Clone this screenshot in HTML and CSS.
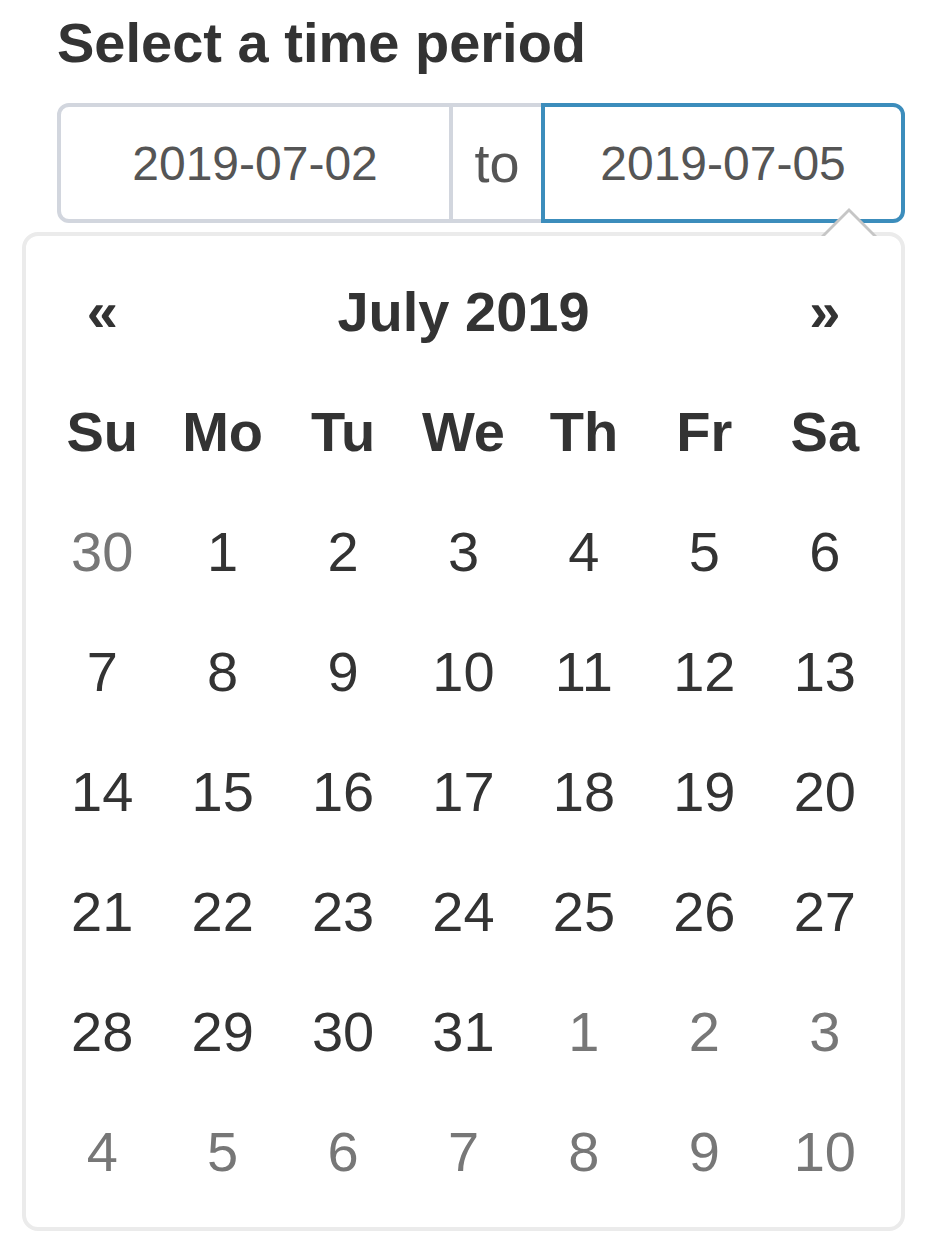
FILE: index.html
```html
<!DOCTYPE html>
<html lang="en">
<head>
<meta charset="utf-8">
<title>Select a time period</title>
<link rel="stylesheet" href="styles.css">
</head>
<body>
<div class="page">
  <label class="title">Select a time period</label>
  <div class="range">
    <div class="field start">2019-07-02</div>
    <div class="addon">to</div>
    <div class="field end">2019-07-05</div>
  </div>
  <div class="picker">
    <div class="cal">
      <div class="nav prev">«</div>
      <div class="month">July 2019</div>
      <div class="nav next">»</div>

      <div class="dow">Su</div><div class="dow">Mo</div><div class="dow">Tu</div><div class="dow">We</div><div class="dow">Th</div><div class="dow">Fr</div><div class="dow">Sa</div>

      <div class="day old">30</div><div class="day">1</div><div class="day">2</div><div class="day">3</div><div class="day">4</div><div class="day">5</div><div class="day">6</div>
      <div class="day">7</div><div class="day">8</div><div class="day">9</div><div class="day">10</div><div class="day">11</div><div class="day">12</div><div class="day">13</div>
      <div class="day">14</div><div class="day">15</div><div class="day">16</div><div class="day">17</div><div class="day">18</div><div class="day">19</div><div class="day">20</div>
      <div class="day">21</div><div class="day">22</div><div class="day">23</div><div class="day">24</div><div class="day">25</div><div class="day">26</div><div class="day">27</div>
      <div class="day">28</div><div class="day">29</div><div class="day">30</div><div class="day">31</div><div class="day new">1</div><div class="day new">2</div><div class="day new">3</div>
      <div class="day new">4</div><div class="day new">5</div><div class="day new">6</div><div class="day new">7</div><div class="day new">8</div><div class="day new">9</div><div class="day new">10</div>
    </div>
  </div>
</div>
</body>
</html>
```

FILE: styles.css
```css
html, body {
  margin: 0;
  padding: 0;
  background: #fff;
}

body {
  font-family: "Liberation Sans", Arial, Helvetica, sans-serif;
  color: #333;
}

.page {
  padding: 3px 33px 0 22px;
}

.title {
  display: block;
  margin-left: 35px;
  font-size: 56px;
  font-weight: bold;
  line-height: 80px;
  color: #333;
  margin-bottom: 20px;
}

.range {
  margin-left: 35px;
  display: grid;
  grid-template-columns: 396px 88px 1fr;
  height: 120px;
}

.field,
.addon {
  box-sizing: border-box;
  display: flex;
  align-items: center;
  justify-content: center;
  font-size: 48px;
  color: #555;
  background: #fff;
}

.start {
  border: 4px solid #d2d6de;
  border-radius: 12px 0 0 12px;
}

.addon {
  font-size: 54px;
  border-top: 4px solid #d2d6de;
  border-bottom: 4px solid #d2d6de;
}

.end {
  border: 4px solid #3c8dbc;
  border-radius: 0 12px 12px 0;
}

.picker {
  position: relative;
  margin-top: 9px;
  border: 4px solid #ebebeb;
  border-radius: 16px;
  padding: 15px 16px 16px;
  background: #fff;
}

.picker::before,
.picker::after {
  content: "";
  position: absolute;
  width: 0;
  height: 0;
  border-style: solid;
  border-color: transparent;
}

.picker::before {
  top: -28px;
  right: 24px;
  border-width: 0 28px 28px 28px;
  border-bottom-color: #c6c6c6;
}

.picker::after {
  top: -24px;
  right: 28px;
  border-width: 0 24px 24px 24px;
  border-bottom-color: #fff;
}

.cal {
  display: grid;
  grid-template-columns: repeat(7, 1fr);
  grid-auto-rows: 120px;
  font-size: 56px;
}

.cal > div {
  display: flex;
  align-items: center;
  justify-content: center;
}

.nav,
.month,
.dow {
  font-weight: bold;
  color: #333;
}

.month {
  grid-column: span 5;
}

.day {
  color: #333;
}

.day.old,
.day.new {
  color: #777;
}
```
